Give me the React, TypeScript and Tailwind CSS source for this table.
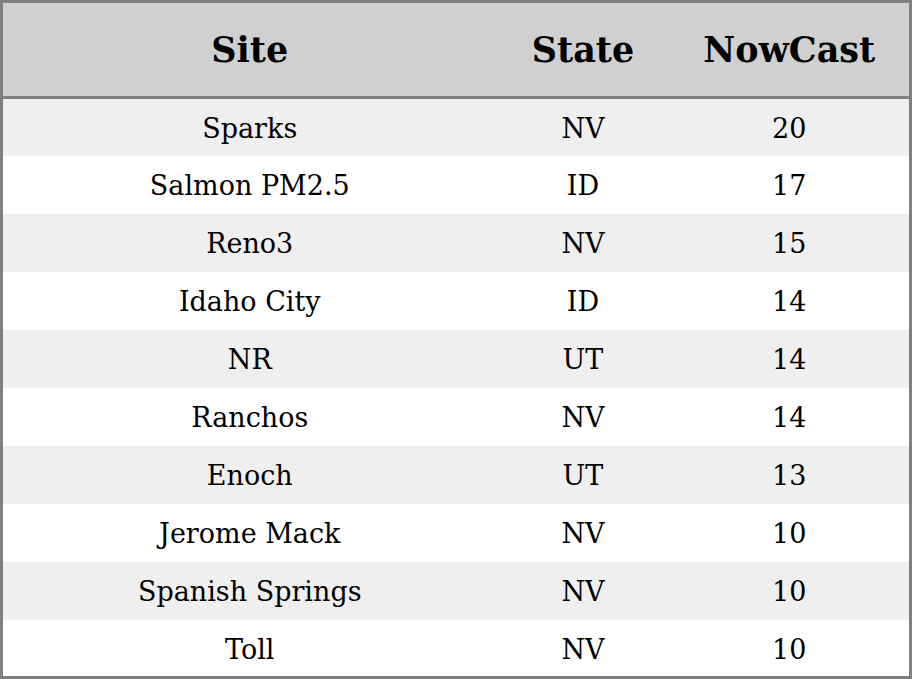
const rows: [string, string, number][] = [
  ["Sparks", "NV", 20],
  ["Salmon PM2.5", "ID", 17],
  ["Reno3", "NV", 15],
  ["Idaho City", "ID", 14],
  ["NR", "UT", 14],
  ["Ranchos", "NV", 14],
  ["Enoch", "UT", 13],
  ["Jerome Mack", "NV", 10],
  ["Spanish Springs", "NV", 10],
  ["Toll", "NV", 10],
];

export default function App() {
  return (
    <div className="w-[912px] h-[679px] bg-white">
      <table
        className="w-[912px] border-collapse border-[3px] border-[#808080] text-black text-center"
        style={{ fontFamily: '"DejaVu Serif", serif' }}
      >
        <thead>
          <tr className="h-[96px] bg-[#d0d0d0] border-b-[3px] border-[#808080]">
            <th className="w-[495px] pt-[2px] text-[35px] font-bold">Site</th>
            <th className="w-[173px] pt-[2px] text-[35px] font-bold">State</th>
            <th className="pt-[2px] text-[35px] font-bold">NowCast</th>
          </tr>
        </thead>
        <tbody>
          {rows.map(([site, state, value], i) => (
            <tr key={site} className={`${i % 2 === 0 ? "bg-[#efefef]" : "bg-white"} h-[58px]`}>
              <td className="pt-[4px] text-[27px]">{site}</td>
              <td className="pt-[4px] text-[27px]">{state}</td>
              <td className="pt-[4px] text-[27px]">{value}</td>
            </tr>
          ))}
        </tbody>
      </table>
    </div>
  );
}
